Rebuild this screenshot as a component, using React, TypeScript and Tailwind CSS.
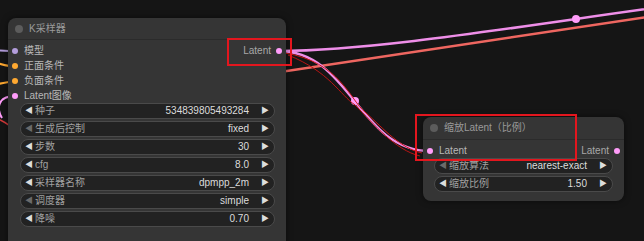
import React from 'react';

const FONT = "font-['Liberation_Sans','Noto_Sans_CJK_SC',sans-serif]";

type SlotProps = { label: string; color: string; side?: 'in' | 'out' };

const Slot = ({ label, color, side = 'in' }: SlotProps) =>
  side === 'in' ? (
    <div className="flex items-center gap-[6px] h-[15px]">
      <span className="w-[6px] h-[6px] rounded-full shrink-0" style={{ background: color }}></span>
      <span className="text-[#b8b8b8] leading-none">{label}</span>
    </div>
  ) : (
    <div className="flex items-center justify-end gap-[5px] h-[15px]">
      <span className="text-[#a8a8a8] leading-none">{label}</span>
      <span className="w-[6px] h-[6px] rounded-full shrink-0" style={{ background: color }}></span>
    </div>
  );

type WidgetProps = { label: string; value: string; dimLeft?: boolean };

const Widget = ({ label, value, dimLeft }: WidgetProps) => (
  <div className="flex items-center h-[16px] rounded-full bg-[#222222] border border-[#4a4a4a] pl-[4px] pr-[5px]">
    <span className={`text-[8px] leading-none ${dimLeft ? 'text-[#6a6a6a]' : 'text-[#dddddd]'}`}>◀</span>
    <span className="ml-[2px] text-[#a0a0a0] leading-none">{label}</span>
    <span className="ml-auto text-[#dcdcdc] leading-none">{value}</span>
    <span className="ml-[12px] text-[8px] leading-none text-[#dddddd]">▶</span>
  </div>
);

const NodeTitle = ({ title, h }: { title: string; h: string }) => (
  <div className={`flex items-center gap-[6px] px-[7px] ${h} border-b border-[#2b2b2b]`}>
    <span className="w-[8px] h-[8px] rounded-full bg-[#5c5c5c]"></span>
    <span className="text-[#9a9a9a] leading-none">{title}</span>
  </div>
);

const Wires = () => (
  <svg className="absolute inset-0" width="644" height="241" viewBox="0 0 644 241" fill="none">
    {/* left edge inputs */}
    <path d="M-20 49 C-5 50 5 51 15 51" stroke="#b39ddb" strokeWidth="2" />
    <path d="M-20 59 C-5 62 5 66 15 67" stroke="#ffa931" strokeWidth="2" />
    <path d="M-20 88 C-5 85 5 82 15 81" stroke="#ffa931" strokeWidth="2" />
    <path d="M15 96 C-2 96 -4 108 2 118" stroke="#ff9cf9" strokeWidth="2" />
    <path d="M-5 118 C2 120 6 123 10 126" stroke="#d23a3a" strokeWidth="1.5" />

    {/* salmon wire under node */}
    <path d="M200 84 C400 55 560 30 700 9" stroke="#ee6660" strokeWidth="2.5" />

    {/* latent out to the right */}
    <path d="M279 51 C429 51 723 -13 873 -13" stroke="#ee8ee8" strokeWidth="2.5" />
    <circle cx="576" cy="19" r="4" fill="#ff9cf9" />

    {/* latent out to upscale node */}
    <path d="M279 51 C350 51 359 151 430 151" stroke="#ee8ee8" strokeWidth="2.5" />
    <circle cx="355" cy="101" r="4" fill="#ff9cf9" />

    {/* hand drawn red marks */}
    <path d="M285 53 C340 62 350 100 365 112 C385 130 400 148 422 153" stroke="#d01818" strokeWidth="1" />
    <path d="M288 55 C330 72 340 95 355 105 C375 125 395 150 420 156" stroke="#b81414" strokeWidth="1" />
  </svg>
);

const App = () => {
  return (
    <div className={`relative w-[644px] h-[241px] overflow-hidden bg-[#151515] text-[10px] ${FONT}`}>
      <Wires />

      {/* K采样器 */}
      <div className="absolute left-[8px] top-[18px] w-[278px] h-[240px] rounded-[8px] bg-[#353535] shadow-[0_0_6px_rgba(0,0,0,0.5)]">
        <NodeTitle title="K采样器" h="h-[22px]" />
        <div className="flex pt-[3px] pl-[4px] pr-[4px]">
          <div className="flex flex-col">
            <Slot label="模型" color="#b39ddb" />
            <Slot label="正面条件" color="#ffa931" />
            <Slot label="负面条件" color="#ffa931" />
            <Slot label="Latent图像" color="#ff9cf9" />
          </div>
          <div className="ml-auto flex flex-col">
            <Slot label="Latent" color="#ff9cf9" side="out" />
          </div>
        </div>
        <div className="flex flex-col gap-[2px] ml-[12px] mr-[11px]">
          <Widget label="种子" value="534839805493284" />
          <Widget label="生成后控制" value="fixed" dimLeft />
          <Widget label="步数" value="30" />
          <Widget label="cfg" value="8.0" />
          <Widget label="采样器名称" value="dpmpp_2m" />
          <Widget label="调度器" value="simple" dimLeft />
          <Widget label="降噪" value="0.70" />
        </div>
      </div>

      {/* 缩放Latent（比例） */}
      <div className="absolute left-[423px] top-[117px] w-[201px] h-[84px] rounded-[8px] bg-[#353535] shadow-[0_0_6px_rgba(0,0,0,0.5)]">
        <NodeTitle title="缩放Latent（比例）" h="h-[23px]" />
        <div className="flex pt-[3px] pl-[4px] pr-[4px]">
          <Slot label="Latent" color="#ff9cf9" />
          <div className="ml-auto">
            <Slot label="Latent" color="#ff9cf9" side="out" />
          </div>
        </div>
        <div className="flex flex-col gap-[2px] mx-[11px]">
          <Widget label="缩放算法" value="nearest-exact" dimLeft />
          <Widget label="缩放比例" value="1.50" />
        </div>
      </div>

      {/* annotation boxes */}
      <div className="absolute left-[227px] top-[38px] w-[65px] h-[28px] border-2 border-[#e3161e]"></div>
      <div className="absolute left-[415px] top-[114px] w-[162px] h-[47px] border-2 border-[#e3161e]"></div>
    </div>
  );
};

export default App;
